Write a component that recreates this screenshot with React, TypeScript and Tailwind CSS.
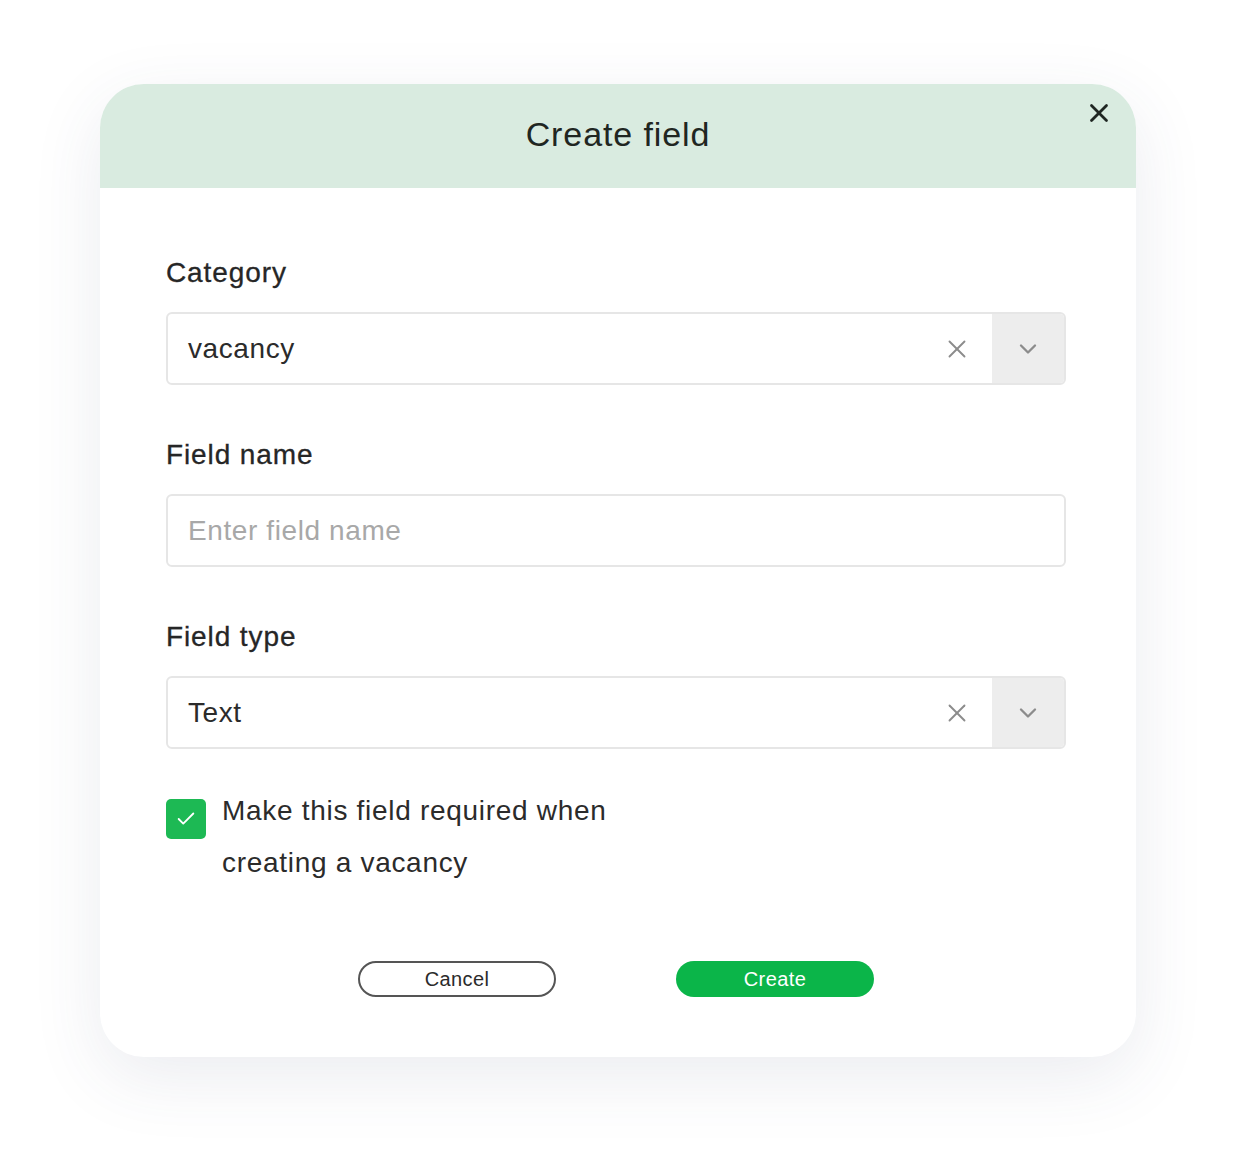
import { Check, ChevronDown, X } from "lucide-react";

function SelectBox({ value }: { value: string }) {
  return (
    <div className="flex h-[73px] w-full overflow-hidden rounded-[6px] border-2 border-[#e6e6e6] bg-white">
      <div className="flex flex-1 items-center pl-[20px] text-[28px] tracking-[0.6px] text-[#2b2b2b]">
        {value}
      </div>
      <div className="flex w-[70px] items-center justify-center text-[#8c8c8c]">
        <X className="h-[30px] w-[30px]" strokeWidth={1.5} />
      </div>
      <div className="flex w-[72px] items-center justify-center bg-[#ededed] text-[#8c8c8c]">
        <ChevronDown className="h-[28px] w-[28px]" strokeWidth={2} />
      </div>
    </div>
  );
}

function Label({ children }: { children: React.ReactNode }) {
  return (
    <p className="mb-[20px] text-[28px] leading-[38px] tracking-[0.9px] text-[#262626] [-webkit-text-stroke:0.3px_#262626]">
      {children}
    </p>
  );
}

export default function App() {
  return (
    <div
      className="flex min-h-[1172px] w-full items-start justify-center bg-white pt-[84px]"
      style={{ fontFamily: '"Liberation Sans", Arial, sans-serif' }}
    >
      <div className="w-[1036px] overflow-hidden rounded-[44px] bg-white shadow-[0_20px_70px_rgba(60,70,110,0.10)]">
        <header className="relative flex h-[104px] items-center justify-center bg-[#d9ebe0]">
          <h1 className="-mt-[4px] text-[34px] tracking-[0.9px] text-[#1f2622]">Create field</h1>
          <button
            type="button"
            className="absolute right-[22px] top-[14px] text-[#1f2622]"
          >
            <X className="h-[30px] w-[30px]" strokeWidth={2.2} />
          </button>
        </header>

        <div className="pl-[66px] pr-[70px] pt-[66px] pb-[60px]">
          <Label>Category</Label>
          <SelectBox value="vacancy" />

          <div className="mt-[51px]">
            <Label>Field name</Label>
            <div className="flex h-[73px] items-center rounded-[6px] border-2 border-[#e6e6e6] bg-white pl-[20px] text-[28px] tracking-[0.6px] text-[#a8a8a8]">
              Enter field name
            </div>
          </div>

          <div className="mt-[51px]">
            <Label>Field type</Label>
            <SelectBox value="Text" />
          </div>

          <div className="mt-[36px] flex gap-[16px]">
            <div className="mt-[14px] flex h-[40px] w-[40px] shrink-0 items-center justify-center rounded-[5px] bg-[#1db954]">
              <Check className="h-[22px] w-[22px] text-white" strokeWidth={2} />
            </div>
            <p className="text-[28px] leading-[52px] tracking-[0.7px] text-[#2b2b2b]">
              Make this field required when
              <br />
              creating a vacancy
            </p>
          </div>

          <div className="mt-[72px] flex justify-center gap-[120px]">
            <button
              type="button"
              className="h-[36px] w-[198px] rounded-full border-2 border-[#555] bg-white text-[20px] tracking-[0.4px] text-[#2b2b2b]"
            >
              Cancel
            </button>
            <button
              type="button"
              className="h-[36px] w-[198px] rounded-full bg-[#0bb549] text-[20px] tracking-[0.4px] text-white"
            >
              Create
            </button>
          </div>
        </div>
      </div>
    </div>
  );
}
